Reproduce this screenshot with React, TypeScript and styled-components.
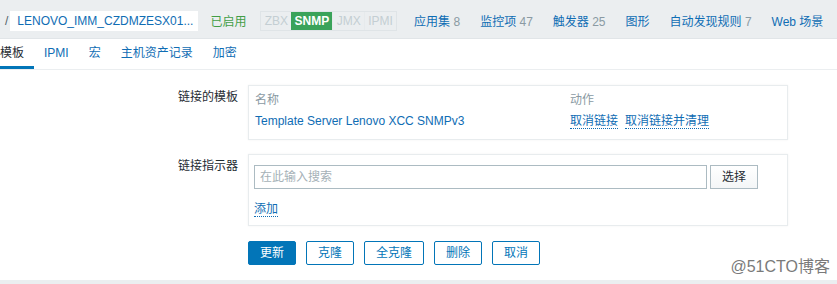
import React from "react";
import styled, { createGlobalStyle } from "styled-components";

const GlobalStyle = createGlobalStyle`
    html, body {
        margin: 0;
        padding: 0;
        background: #ffffff;
    }
    body {
        width: 837px;
        height: 284px;
        overflow: hidden;
        font-family: "Liberation Sans", Arial, "Noto Sans CJK SC", sans-serif;
        font-size: 12px;
        color: #1f2c33;
    }
`;

const Page = styled.div`
    position: relative;
    width: 837px;
    height: 284px;
    display: flex;
    flex-direction: column;
`;

const HeaderBar = styled.div`
    height: 39px;
    background: #ebeef0;
    border-bottom: 1px solid #e1e5e8;
    display: flex;
    align-items: center;
    padding: 3px 0 0 5px;
    box-sizing: border-box;
    white-space: nowrap;
`;

const Slash = styled.span`
    color: #4f5f67;
    margin-right: 2px;
`;

const Crumb = styled.span`
    background: #ffffff;
    color: #0f6db4;
    height: 20px;
    line-height: 20px;
    padding: 0 5px 0 7px;
    margin-right: 12px;
`;

const Status = styled.span`
    color: #429e47;
    margin-right: 14px;
`;

const TagGroup = styled.span`
    display: inline-flex;
    border: 1px solid #dfe4e7;
    height: 18px;
    margin-right: 17px;
`;

const Tag = styled.span<{ $on?: boolean }>`
    line-height: 18px;
    padding: 0 3.25px;
    color: ${(p) => (p.$on ? "#ffffff" : "#c4ced3")};
    background: ${(p) => (p.$on ? "#3aa35a" : "transparent")};
    font-weight: ${(p) => (p.$on ? "bold" : "normal")};
    border-left: ${(p) => (p.$on ? "none" : "1px solid #e6eaec")};
    &:first-child {
        border-left: none;
    }
`;

const HeadLink = styled.span`
    color: #0f6db4;
    margin-right: 20px;
`;

const Count = styled.span`
    color: #8a9aa3;
`;

const TabBar = styled.div`
    height: 31px;
    border-bottom: 1px solid #ebeef0;
    display: flex;
    margin-left: -10px;
    box-sizing: border-box;
`;

const Tab = styled.div<{ $active?: boolean }>`
    padding: 0 10px;
    line-height: 28px;
    height: 30px;
    box-sizing: border-box;
    color: ${(p) => (p.$active ? "#1f2c33" : "#0f6db4")};
    border-bottom: 3px solid ${(p) => (p.$active ? "#0275b8" : "transparent")};
`;

const Form = styled.div`
    display: flex;
    flex-direction: column;
    gap: 14px;
    padding-top: 15px;
`;

const FormRow = styled.div`
    display: grid;
    grid-template-columns: 238px 540px;
    column-gap: 10px;
`;

const Label = styled.div`
    text-align: right;
    padding-top: 5px;
    line-height: 14px;
    white-space: nowrap;
`;

const Panel = styled.div<{ $pad: string }>`
    border: 1px solid #e8ecee;
    box-shadow: 0 0 2px rgba(0, 0, 0, 0.06);
    padding: ${(p) => p.$pad};
`;

const TableRow = styled.div<{ $h: number }>`
    display: grid;
    grid-template-columns: 315px 1fr;
    height: ${(p) => p.$h}px;
    align-items: center;
`;

const ColHead = styled.span`
    color: #8a9aa3;
`;

const Link = styled.span`
    color: #0f6db4;
`;

const DottedLink = styled.span`
    color: #0f6db4;
    border-bottom: 1px dotted #0f6db4;
    margin-right: 7px;
    line-height: 14px;
`;

const SearchLine = styled.div`
    display: flex;
    gap: 3px;
`;

const SearchInput = styled.div`
    width: 453px;
    height: 24px;
    box-sizing: border-box;
    border: 1px solid #acbbc2;
    color: #a5b1b7;
    line-height: 22px;
    padding-left: 5px;
`;

const SelectButton = styled.div`
    width: 48px;
    height: 24px;
    box-sizing: border-box;
    border: 1px solid #acbbc2;
    background: linear-gradient(#ffffff, #f4f6f7);
    text-align: center;
    line-height: 22px;
`;

const AddLine = styled.div`
    margin-top: 10px;
    height: 20px;
    display: flex;
    align-items: center;
`;

const Buttons = styled.div`
    display: flex;
    gap: 10px;
    padding-left: 248px;
    padding-top: 1px;
`;

const Button = styled.div<{ $primary?: boolean }>`
    height: 24px;
    line-height: 22px;
    box-sizing: border-box;
    padding: 0 11px;
    border: 1px solid #0275b8;
    border-radius: 2px;
    background: ${(p) => (p.$primary ? "#0275b8" : "#ffffff")};
    color: ${(p) => (p.$primary ? "#ffffff" : "#0275b8")};
`;

const Footer = styled.div`
    margin-top: auto;
    height: 4px;
    background: #ebeef0;
`;

const Watermark = styled.div`
    position: absolute;
    right: 7px;
    bottom: 7px;
    font-family: "Liberation Sans", "Noto Sans CJK SC", sans-serif;
    font-size: 16px;
    color: #7a7a7a;
`;

const App = () => {
    return (
        <Page>
            <GlobalStyle />
            <HeaderBar>
                <Slash>/</Slash>
                <Crumb>LENOVO_IMM_CZDMZESX01...</Crumb>
                <Status>已启用</Status>
                <TagGroup>
                    <Tag>ZBX</Tag>
                    <Tag $on>SNMP</Tag>
                    <Tag>JMX</Tag>
                    <Tag>IPMI</Tag>
                </TagGroup>
                <HeadLink>应用集 <Count>8</Count></HeadLink>
                <HeadLink>监控项 <Count>47</Count></HeadLink>
                <HeadLink>触发器 <Count>25</Count></HeadLink>
                <HeadLink>图形</HeadLink>
                <HeadLink>自动发现规则 <Count>7</Count></HeadLink>
                <HeadLink>Web 场景</HeadLink>
            </HeaderBar>
            <TabBar>
                <Tab $active>模板</Tab>
                <Tab>IPMI</Tab>
                <Tab>宏</Tab>
                <Tab>主机资产记录</Tab>
                <Tab>加密</Tab>
            </TabBar>
            <Form>
                <FormRow>
                    <Label>链接的模板</Label>
                    <Panel $pad="4px 6px 4px 6px">
                        <TableRow $h={17}>
                            <ColHead>名称</ColHead>
                            <ColHead>动作</ColHead>
                        </TableRow>
                        <TableRow $h={28}>
                            <Link>Template Server Lenovo XCC SNMPv3</Link>
                            <span>
                                <DottedLink>取消链接</DottedLink>
                                <DottedLink>取消链接并清理</DottedLink>
                            </span>
                        </TableRow>
                    </Panel>
                </FormRow>
                <FormRow>
                    <Label>链接指示器</Label>
                    <Panel $pad="10px 6px 6px 5px">
                        <SearchLine>
                            <SearchInput>在此输入搜索</SearchInput>
                            <SelectButton>选择</SelectButton>
                        </SearchLine>
                        <AddLine>
                            <DottedLink>添加</DottedLink>
                        </AddLine>
                    </Panel>
                </FormRow>
                <Buttons>
                    <Button $primary>更新</Button>
                    <Button>克隆</Button>
                    <Button>全克隆</Button>
                    <Button>删除</Button>
                    <Button>取消</Button>
                </Buttons>
            </Form>
            <Footer />
            <Watermark>@51CTO博客</Watermark>
        </Page>
    );
};

export default App;
